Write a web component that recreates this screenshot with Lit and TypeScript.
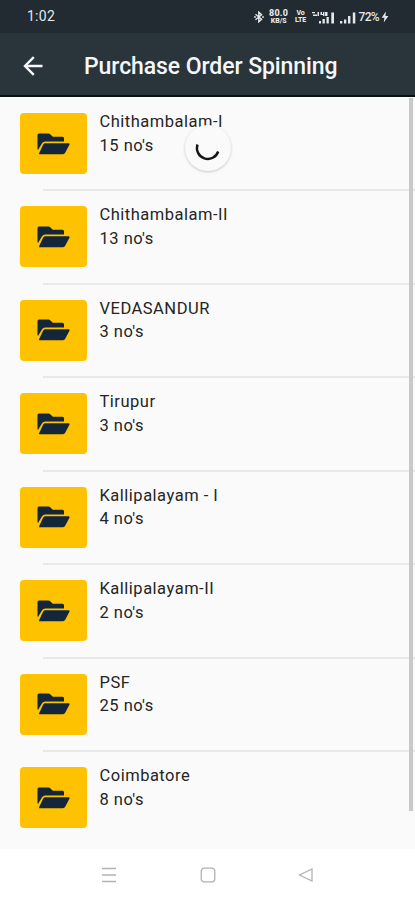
import { LitElement, html, css } from "lit";
import { customElement, property } from "lit/decorators.js";

interface Unit {
  name: string;
  count: number;
}

const UNITS: Unit[] = [
  { name: "Chithambalam-I", count: 15 },
  { name: "Chithambalam-II", count: 13 },
  { name: "VEDASANDUR", count: 3 },
  { name: "Tirupur", count: 3 },
  { name: "Kallipalayam - I", count: 4 },
  { name: "Kallipalayam-II", count: 2 },
  { name: "PSF", count: 25 },
  { name: "Coimbatore", count: 8 },
];

@customElement("status-bar")
class StatusBar extends LitElement {
  static styles = css`
    :host {
      display: flex;
      align-items: center;
      height: 33px;
      box-sizing: border-box;
      padding: 0 26px 0 27px;
      background: #222b31;
      color: #e4e8ea;
      font-family: Roboto, sans-serif;
    }
    .time { font-size: 14px; letter-spacing: 0.25px; flex: 1; line-height: 35px; }
    .icons { display: flex; align-items: center; height: 16px; margin-top: 1px; }
    .stack {
      display: flex;
      flex-direction: column;
      align-items: center;
      font-weight: 800;
      font-size: 7px;
      line-height: 7.5px;
    }
    .speed { width: 20px; margin-left: 5px; }
    .speed .top { font-size: 9px; line-height: 9px; letter-spacing: 0.2px; }
    .lte { width: 14px; margin-left: 5px; }
    .signal { margin-left: 4px; }
    .signal2 { margin-left: 5px; }
    .battery { font-size: 12px; font-weight: 500; margin: 0 2px 0 3px; letter-spacing: -0.7px; line-height: 16px; }
    svg { display: block; fill: #e4e8ea; }
  `;

  render() {
    return html`
      <span class="time">1:02</span>
      <div class="icons">
        <svg width="10" height="12" viewBox="0 0 10 12">
          <path d="M1.5 3.2 7.6 8.2 4.8 10.8V1.2L7.6 3.8 1.5 8.8" fill="none" stroke="#e4e8ea" stroke-width="1.4" />
          <circle cx="1" cy="6" r=".9" /><circle cx="9" cy="6" r=".9" />
        </svg>
        <div class="stack speed"><span class="top">80.0</span><span>KB/S</span></div>
        <div class="stack lte"><span>Vo</span><span>LTE</span></div>
        <svg class="signal" width="23" height="13" viewBox="0 0 23 13">
          <path d="M0 1h3v1.3H0zM1 3.6h4v1.3H1zM5.5 1H7v4H5.5zM8.5 1H10v2h1V1h1.4v4H11V4H8.5zM13 1h2.5v4H13zM7 10h2v2.5H7zM10.5 8h2.3v4.5h-2.3zM14.5 6h2.3v6.5h-2.3zM19.3 1.5h2.7v11h-2.7z" />
        </svg>
        <svg class="signal2" width="16" height="13" viewBox="0 0 16 13">
          <path d="M0 10h2.3v2.5H0zM4 8.5h2.3v4H4zM8 5h2.4v7.5H8zM12.8 1.5h2.5v11h-2.5z" />
        </svg>
        <span class="battery">72%</span>
        <svg width="8" height="12" viewBox="0 0 8 12"><path d="M4.8.4.7 6.7h2.7L2.8 11.6 7.4 5H4.5z" /></svg>
      </div>
    `;
  }
}

@customElement("unit-row")
class UnitRow extends LitElement {
  @property({ attribute: false }) unit!: Unit;

  static styles = css`
    :host {
      display: flex;
      box-sizing: border-box;
      height: 93.45px;
      padding: 16px 0 0 20px;
      font-family: Roboto, sans-serif;
      color: #252525;
    }
    .tile {
      display: flex;
      align-items: center;
      justify-content: center;
      width: 67px;
      height: 61px;
      border-radius: 4px;
      background: #fec200;
    }
    .text {
      display: flex;
      flex-direction: column;
      margin: -3px 0 0 12.5px;
      font-size: 16.5px;
      line-height: 23.5px;
      letter-spacing: 0.5px;
      white-space: nowrap;
    }
    svg { display: block; fill: #14263a; }
  `;

  render() {
    return html`
      <div class="tile">
        <svg width="33" height="22" viewBox="0 0 33 22">
          <path d="M.5 16V2Q.5.5 2 .5H11.5Q12.5.5 13.2 1.2L15.8 3.8H25.5Q27 3.8 27 5.3V8.4H8.2Q6.2 8.4 5.2 10L1 17Z" />
          <path d="M8.3 10.3H31.4Q33.2 10.3 32.4 11.8L28.2 19.7Q27.3 21.3 25.5 21.3H3.1Q1.5 21.3 2.3 19.8L6.2 11.6Q6.9 10.3 8.3 10.3Z" />
        </svg>
      </div>
      <div class="text">
        <span>${this.unit.name}</span>
        <span>${this.unit.count} no's</span>
      </div>
    `;
  }
}

@customElement("app-root")
class AppRoot extends LitElement {
  static styles = css`
    :host {
      display: flex;
      flex-direction: column;
      width: 100%;
      height: 900px;
      overflow: hidden;
      background: #fff;
      font-family: Roboto, sans-serif;
    }
    .appbar {
      display: flex;
      align-items: center;
      height: 64px;
      box-sizing: border-box;
      padding: 3px 0 0 23px;
      border-bottom: 2px solid #0b1013;
      background: #29343b;
      color: #f5f8fa;
    }
    .appbar svg { display: block; }
    .title {
      margin: 3px 0 0 41px;
      font-size: 23px;
      line-height: 30px;
      font-weight: 500;
      letter-spacing: -0.08px;
      white-space: nowrap;
    }
    .list {
      position: relative;
      height: 752px;
      background: #fafafa;
      overflow: hidden;
    }
    .divider { height: 2px; margin: -1px 0 -1px 43px; background: #e8e8e8; }
    .spinner {
      position: absolute;
      left: 185px;
      top: 28px;
      width: 46px;
      height: 46px;
      border-radius: 50%;
      background: #fafafa;
      box-shadow: 0 1px 3px rgba(0, 0, 0, 0.2);
    }
    .scrollbar {
      position: absolute;
      right: 2px;
      top: 1px;
      width: 4px;
      height: 713px;
      background: #c9c9c9;
    }
    .nav {
      display: flex;
      align-items: center;
      justify-content: space-between;
      height: 51px;
      padding: 0 101px;
    }
    .nav svg { display: block; fill: none; stroke: #b2b2b2; stroke-width: 1.3; }
  `;

  render() {
    return html`
      <status-bar></status-bar>
      <div class="appbar">
        <svg width="20" height="20" viewBox="0 0 20 20" fill="none" stroke="#f5f8fa" stroke-width="2.4">
          <path d="M10.8 1.2 2 10l8.8 8.8M2 10h17.5" />
        </svg>
        <div class="title">Purchase Order Spinning</div>
      </div>
      <div class="list">
        ${UNITS.map(
          (unit, i) => html`
            ${i > 0 ? html`<div class="divider"></div>` : ""}
            <unit-row .unit=${unit}></unit-row>
          `
        )}
        <div class="spinner">
          <svg width="46" height="46" viewBox="0 0 46 46" fill="none" stroke="#161616" stroke-width="2.4">
            <path d="M12.5 19.5A10.9 10.9 0 0 0 33.2 26.5" />
          </svg>
        </div>
        <div class="scrollbar"></div>
      </div>
      <div class="nav">
        <svg width="16" height="16" viewBox="0 0 16 16"><path d="M1 1.5h14M1 8h14M1 14.5h14" /></svg>
        <svg width="16" height="16" viewBox="0 0 16 16"><rect x="1.2" y="1.2" width="13.6" height="13.6" rx="3" /></svg>
        <svg width="16" height="16" viewBox="0 0 16 16"><path d="M14 2v12L1.5 8Z" /></svg>
      </div>
    `;
  }
}
